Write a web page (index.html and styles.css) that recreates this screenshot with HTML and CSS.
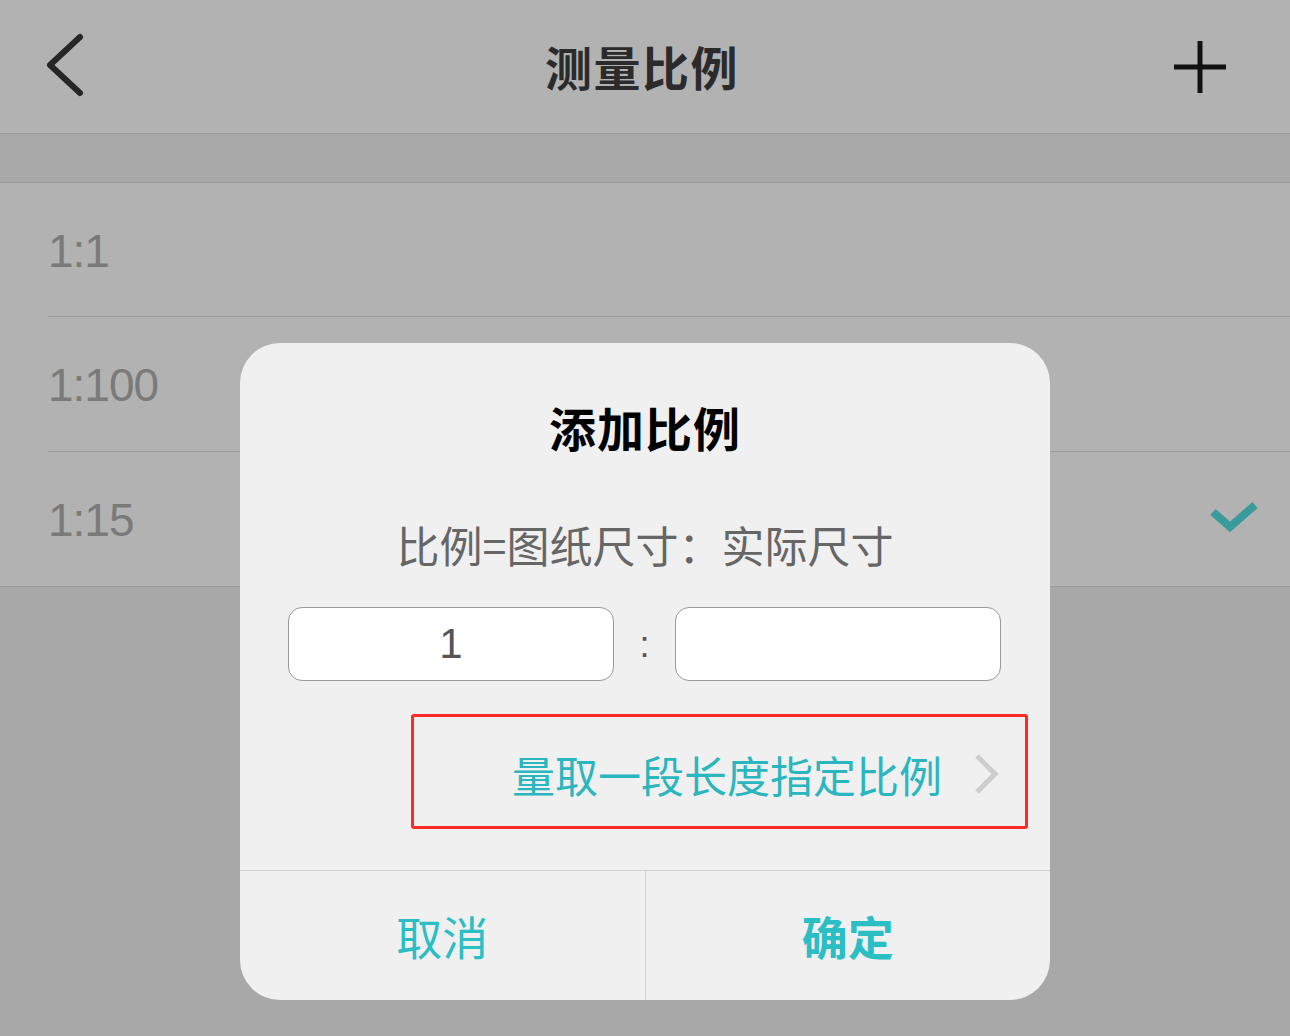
FILE: index.html
```html
<!DOCTYPE html>
<html lang="zh-CN">
<head>
<meta charset="utf-8">
<title>测量比例</title>
<link rel="stylesheet" href="styles.css">
</head>
<body>
<div class="page">
  <header class="navbar">
    <div class="nav-side">
      <svg class="icon-back" width="50" height="70" viewBox="0 0 50 70"><path d="M36 5 L6 33 L36 61" fill="none" stroke="#262626" stroke-width="6" stroke-linecap="round" stroke-linejoin="round"/></svg>
    </div>
    <h1 class="nav-title">测量比例</h1>
    <div class="nav-side nav-right">
      <svg class="icon-plus" width="56" height="56" viewBox="0 0 56 56"><path d="M28 2 V54 M2 28 H54" stroke="#111" stroke-width="5"/></svg>
    </div>
  </header>
  <div class="band"></div>
  <ul class="list">
    <li class="row first"><span class="ratio">1:1</span></li>
    <li class="row"><span class="ratio">1:100</span></li>
    <li class="row last"><span class="ratio">1:15</span>
      <svg class="check" width="52" height="36" viewBox="0 0 52 36"><path d="M4 11 L21 26 L46 4" fill="none" stroke="#3a9b9c" stroke-width="8"/></svg>
    </li>
  </ul>

  <div class="dialog">
    <div class="dlg-body">
      <h2 class="dlg-title">添加比例</h2>
      <p class="dlg-sub">比例=图纸尺寸：实际尺寸</p>
      <div class="inputs">
        <div class="field">1</div>
        <span class="colon">:</span>
        <div class="field"></div>
      </div>
      <div class="link-box">
        <span class="link-text">量取一段长度指定比例</span>
        <svg class="link-arrow" width="30" height="42" viewBox="0 0 30 42"><path d="M6 3 L24 21 L6 39" fill="none" stroke="#cdcdcd" stroke-width="5"/></svg>
      </div>
    </div>
    <div class="dlg-actions">
      <button class="btn">取消</button>
      <button class="btn btn-ok">确定</button>
    </div>
  </div>
</div>
</body>
</html>
```

FILE: styles.css
```css
* { box-sizing: border-box; }
html, body { margin: 0; padding: 0; }
body {
  width: 1290px;
  height: 1036px;
  overflow: hidden;
  background: #a8a8a8;
  font-family: "Noto Sans CJK SC", "Liberation Sans", sans-serif;
}
.page {
  position: relative;
  width: 1290px;
  height: 1036px;
  background: #a8a8a8;
}
.navbar {
  height: 134px;
  background: #b2b2b2;
  border-bottom: 1px solid #9b9b9b;
  display: flex;
  align-items: center;
  justify-content: space-between;
  padding: 0 60px 0 44px;
}
.nav-side {
  width: 64px;
  display: flex;
  align-items: center;
}
.nav-right { justify-content: flex-end; }
.icon-back { display: block; }
.icon-plus { display: block; margin-right: 2px; }
.nav-title {
  margin: 0 0 0 10px;
  font-size: 47px;
  font-weight: 700;
  color: #2b2b2b;
  letter-spacing: 1.5px;
  line-height: 1;
  padding-bottom: 2px;
}
.band {
  height: 49px;
  background: #a9a9a9;
  border-bottom: 1px solid #9b9b9b;
}
.list {
  list-style: none;
  margin: 0;
  padding: 0;
  background: #b2b2b2;
  border-bottom: 1px solid #9b9b9b;
}
.row {
  height: 135px;
  margin-left: 48px;
  border-bottom: 1px solid #9b9b9b;
  display: flex;
  align-items: center;
  justify-content: space-between;
  padding-right: 29px;
}
.row.first { height: 134px; }
.row.last { border-bottom: none; height: 134px; }
.ratio {
  font-family: "Liberation Sans", "Noto Sans", sans-serif;
  font-size: 46px;
  color: #7a7a7a;
  padding-top: 2px;
  letter-spacing: -1px;
}
.check { display: block; }

.dialog {
  position: absolute;
  left: 240px;
  top: 343px;
  width: 810px;
  height: 657px;
  background: #f0f0f0;
  border-radius: 40px;
  display: flex;
  flex-direction: column;
  overflow: hidden;
}
.dlg-body {
  flex: 1;
  display: flex;
  flex-direction: column;
  align-items: center;
  padding-top: 55px;
}
.dlg-title {
  margin: 0;
  height: 58px;
  line-height: 58px;
  font-size: 47px;
  font-weight: 700;
  color: #000;
  letter-spacing: 1px;
}
.dlg-sub {
  margin: 60px 0 0;
  height: 56px;
  line-height: 56px;
  font-size: 43px;
  color: #666;
}
.inputs {
  margin-top: 35px;
  width: 100%;
  padding: 0 49px 0 48px;
  display: flex;
  align-items: center;
  justify-content: space-between;
}
.field {
  width: 326px;
  height: 74px;
  background: #fff;
  border: 1.5px solid #9a9a9a;
  border-radius: 14px;
  display: flex;
  align-items: center;
  justify-content: center;
  font-family: "Liberation Sans", "Noto Sans", sans-serif;
  font-size: 42px;
  color: #555;
}
.colon {
  font-family: "Liberation Sans", sans-serif;
  font-size: 36px;
  color: #555;
  padding-top: 2px;
}
.link-box {
  margin-top: 33px;
  align-self: flex-start;
  margin-left: 171px;
  width: 617px;
  height: 115px;
  border: 3px solid #ff2a24;
  border-radius: 3px;
  display: flex;
  align-items: center;
  justify-content: flex-end;
  padding-right: 24px;
}
.link-text {
  font-size: 43px;
  color: #2ab6bf;
  margin-right: 29px;
  padding-top: 4px;
}
.link-arrow { display: block; margin-top: 4px; }
.dlg-actions {
  height: 130px;
  border-top: 1.5px solid #cfcfcf;
  display: flex;
}
.btn {
  flex: 1;
  border: none;
  background: transparent;
  font-family: "Noto Sans CJK SC", sans-serif;
  font-size: 46px;
  color: #2bbec4;
  padding: 0 0 2px;
  margin: 0;
}
.btn + .btn { border-left: 1px solid #d0d0d0; }
.btn-ok { font-weight: 700; }
```
